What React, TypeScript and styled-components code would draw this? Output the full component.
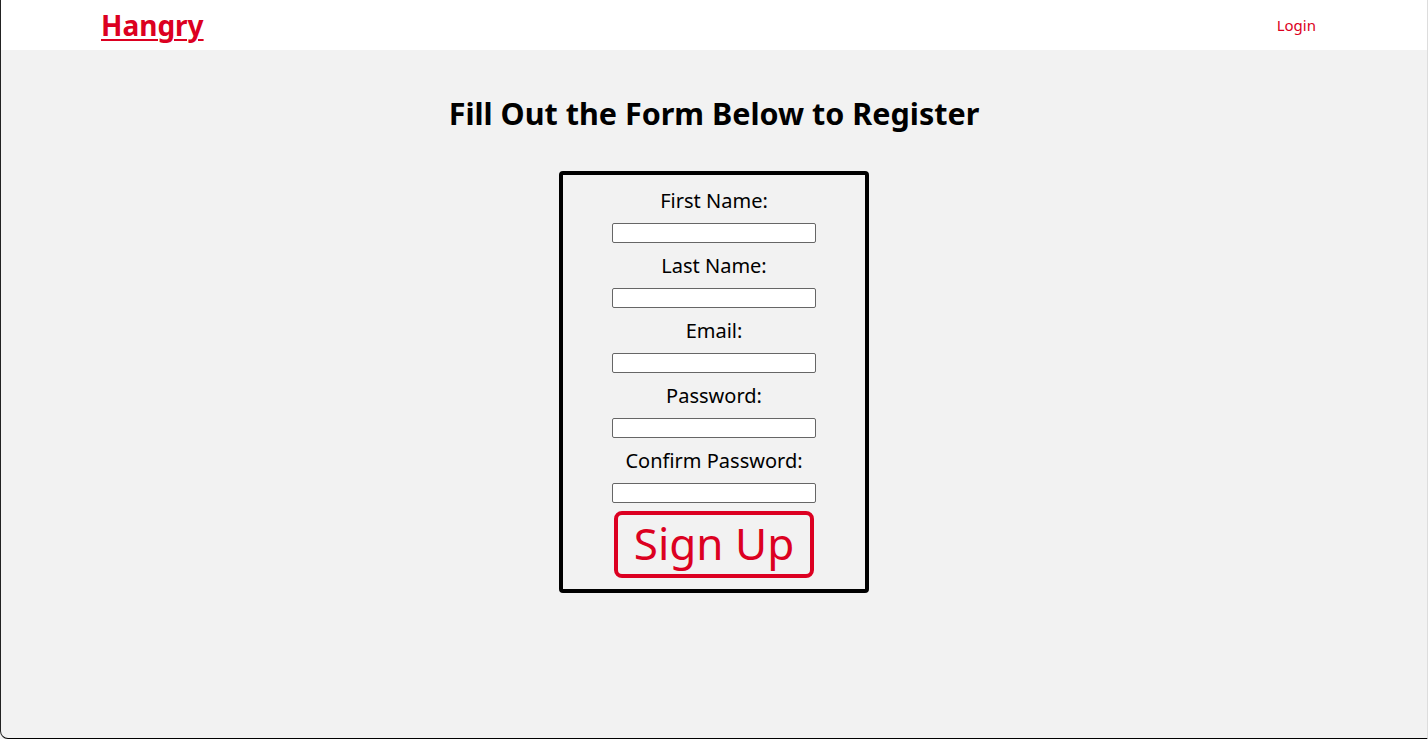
import React from "react";
import styled, { createGlobalStyle } from "styled-components";

const red = "#dc0021";

const GlobalStyle = createGlobalStyle`
  html, body {
    margin: 0;
    padding: 0;
    height: 100%;
    background: #f2f2f2;
  }
  body {
    font-family: "Trebuchet MS", "Noto Sans", "DejaVu Sans", sans-serif;
  }
`;

const Frame = styled.div`
  box-sizing: border-box;
  height: 739px;
  border-left: 1px solid #222;
  border-bottom: 1px solid #000;
  border-right: 1px solid #ddd;
  border-bottom-left-radius: 8px;
  background: #f2f2f2;
  overflow: hidden;
`;

const NavBar = styled.header`
  display: flex;
  align-items: center;
  justify-content: space-between;
  height: 50px;
  padding: 0 111px 0 100px;
  background: #fff;
`;

const Brand = styled.a`
  color: ${red};
  font-size: 28px;
  font-weight: bold;
  text-decoration: underline;
  text-decoration-thickness: 2px;
  text-underline-offset: 3px;
  cursor: pointer;
`;

const NavLink = styled.a`
  color: ${red};
  font-size: 15px;
  text-decoration: none;
  cursor: pointer;
`;

const Main = styled.main`
  display: flex;
  flex-direction: column;
  align-items: center;
  padding-top: 42px;
`;

const Heading = styled.h1`
  margin: 0 0 37px;
  font-size: 30.5px;
  font-weight: bold;
  color: #000;
`;

const Form = styled.form`
  box-sizing: border-box;
  width: 310px;
  display: flex;
  flex-direction: column;
  align-items: center;
  padding: 14px 0 11px;
  border: 4px solid #000;
  border-radius: 4px;
`;

const Label = styled.label`
  font-size: 20px;
  line-height: 24px;
  color: #000;
  margin-bottom: 10px;
`;

const Input = styled.input`
  box-sizing: border-box;
  width: 204px;
  height: 20px;
  margin: 0 0 11px;
  border: 1px solid #666;
  border-radius: 2px;
  background: #fff;
`;

const SubmitButton = styled.button`
  box-sizing: border-box;
  width: 200px;
  height: 67px;
  margin-top: -3px;
  border: 4px solid ${red};
  border-radius: 8px;
  background: #f2f2f2;
  color: ${red};
  font-family: inherit;
  font-size: 44px;
  line-height: 1;
  padding: 0 0 3px;
  cursor: pointer;
`;

const fields = [
  { id: "firstName", label: "First Name:", type: "text" },
  { id: "lastName", label: "Last Name:", type: "text" },
  { id: "email", label: "Email:", type: "email" },
  { id: "password", label: "Password:", type: "password" },
  { id: "confirmPassword", label: "Confirm Password:", type: "password" },
];

export default function App(): JSX.Element {
  return (
    <>
      <GlobalStyle />
      <Frame>
        <NavBar>
          <Brand>Hangry</Brand>
          <NavLink>Login</NavLink>
        </NavBar>
        <Main>
          <Heading>Fill Out the Form Below to Register</Heading>
          <Form onSubmit={(e) => e.preventDefault()}>
            {fields.map((f) => (
              <React.Fragment key={f.id}>
                <Label htmlFor={f.id}>{f.label}</Label>
                <Input id={f.id} type={f.type} />
              </React.Fragment>
            ))}
            <SubmitButton type="submit">Sign Up</SubmitButton>
          </Form>
        </Main>
      </Frame>
    </>
  );
}
